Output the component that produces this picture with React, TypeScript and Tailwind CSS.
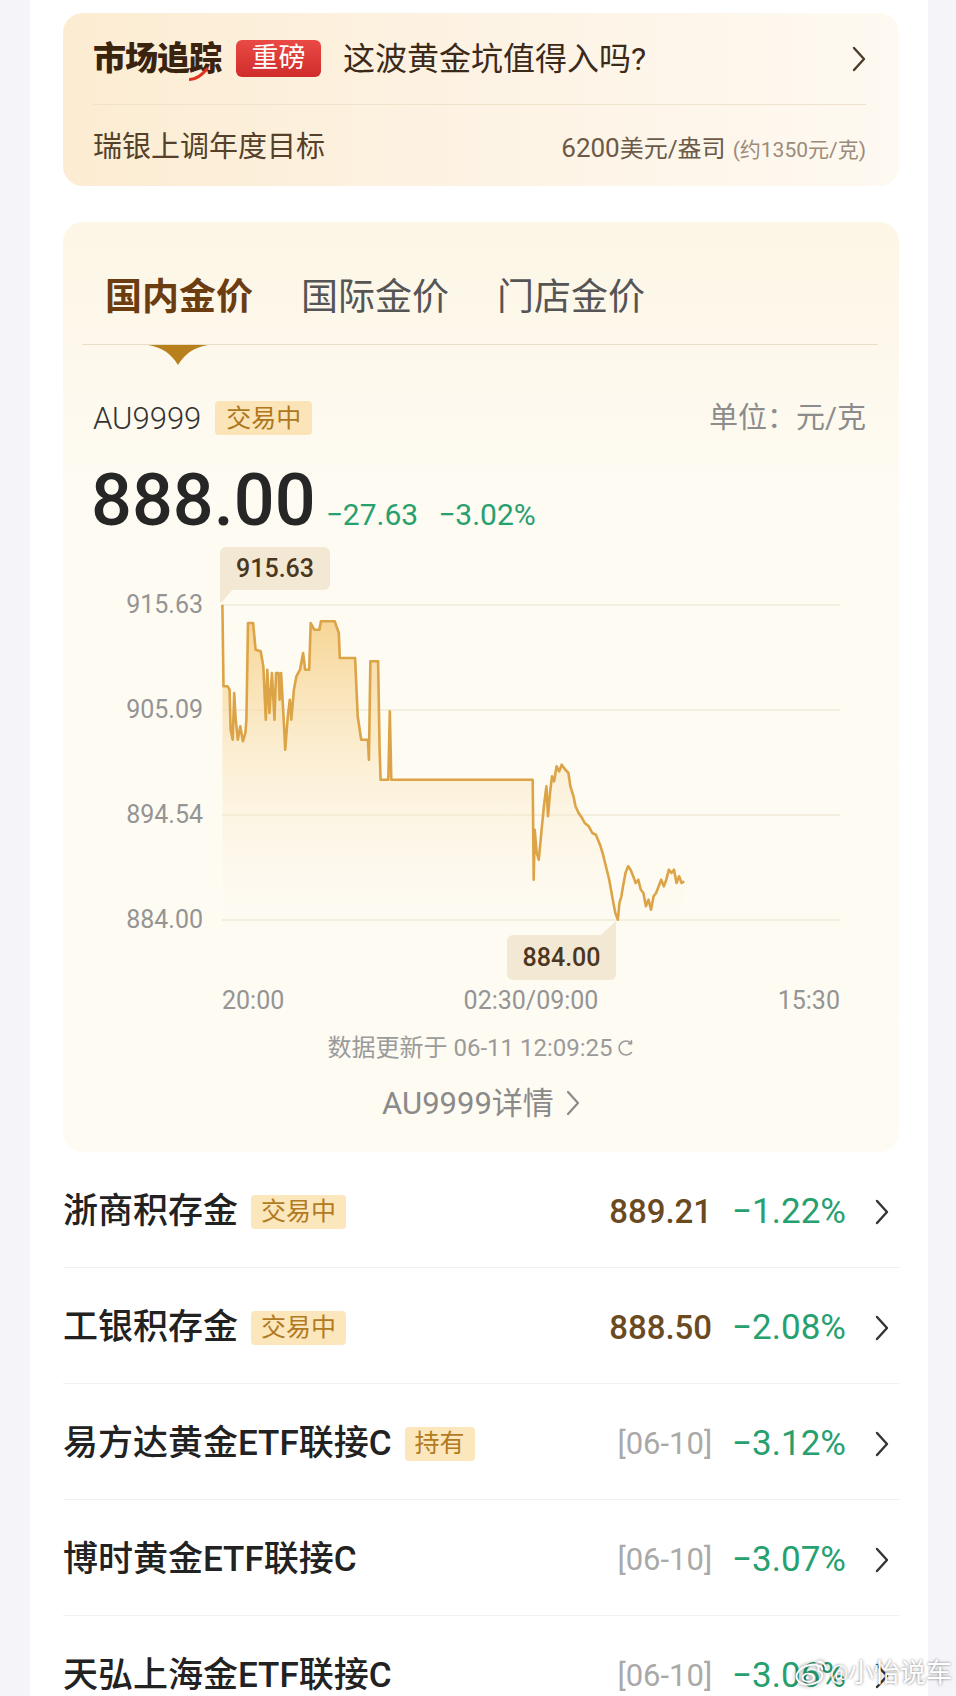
import React from "react";

const ZP: [number, number][] = [
  [240, 215], [242, 460], [250, 460], [254, 470], [256, 590], [260, 620], [263, 480], [266, 560],
  [270, 620], [275, 580], [280, 625], [285, 600], [287, 560], [290, 270], [300, 270], [305, 350],
  [315, 355], [320, 400], [325, 560], [328, 410], [332, 540], [337, 420], [342, 560], [345, 420],
  [350, 420], [352, 500], [355, 420], [360, 560], [363, 650], [368, 550], [372, 500], [375, 560],
  [380, 470], [385, 430], [392, 410], [398, 360], [402, 410], [410, 410], [413, 270], [420, 290],
  [430, 290], [433, 265], [460, 265], [468, 300], [470, 375], [500, 375], [505, 550], [512, 620],
  [525, 620], [527, 680], [530, 385], [545, 385], [548, 650], [550, 740], [565, 740], [568, 535],
  [571, 740], [848, 740], [850, 1040], [852, 890], [856, 960], [860, 980], [865, 900], [870, 820],
  [875, 760], [878, 850], [882, 780], [886, 730], [890, 745], [895, 700], [900, 715], [905, 695],
  [912, 710], [918, 720], [922, 760], [928, 790], [932, 820], [938, 840], [945, 855], [950, 870],
  [958, 880], [965, 900], [972, 905], [980, 935], [985, 960], [990, 990], [998, 1040], [1005, 1100],
  [1010, 1140], [1015, 1160], [1018, 1110], [1022, 1090], [1025, 1060], [1030, 1020], [1035, 1000],
  [1040, 1010], [1045, 1030], [1050, 1050], [1055, 1040], [1060, 1070], [1065, 1080], [1070, 1120],
  [1075, 1100], [1080, 1130], [1085, 1090], [1090, 1080], [1095, 1060], [1100, 1040], [1105, 1060],
  [1110, 1040], [1115, 1010], [1120, 1020], [1125, 1010], [1130, 1050], [1135, 1030], [1140, 1050],
  [1145, 1045],
];

const PTS = ZP.map(([x, y]) => [100 + x / 1.96, 530 + y / 3]);
const LINE = PTS.map(([x, y], i) => `${i === 0 ? "M" : "L"}${x.toFixed(1)} ${y.toFixed(1)}`).join(" ");
const LAST = PTS[PTS.length - 1];
const AREA = `${LINE} L${LAST[0].toFixed(1)} 930 L${PTS[0][0].toFixed(1)} 930 Z`;

function Chevron({ w = 14, h = 26, sw = 2.4 }: { w?: number; h?: number; sw?: number }) {
  return (
    <svg width={w} height={h} viewBox={`0 0 ${w} ${h}`} className="shrink-0">
      <polyline
        points={`2,2 ${w - 2},${h / 2} 2,${h - 2}`}
        fill="none"
        stroke="currentColor"
        strokeWidth={sw}
        strokeLinecap="round"
        strokeLinejoin="round"
      />
    </svg>
  );
}

function Badge({ children }: { children: React.ReactNode }) {
  return (
    <span className="ml-[13px] inline-flex h-[34px] items-center rounded-[4px] bg-[#fce6bb] px-[10px] text-[25px] leading-none text-[#b27a22]">
      {children}
    </span>
  );
}

type Row = {
  name: string;
  badge?: string;
  price?: string;
  date?: string;
  pct: string;
};

const ROWS: Row[] = [
  { name: "浙商积存金", badge: "交易中", price: "889.21", pct: "−1.22%" },
  { name: "工银积存金", badge: "交易中", price: "888.50", pct: "−2.08%" },
  { name: "易方达黄金ETF联接C", badge: "持有", date: "[06-10]", pct: "−3.12%" },
  { name: "博时黄金ETF联接C", date: "[06-10]", pct: "−3.07%" },
  { name: "天弘上海金ETF联接C", date: "[06-10]", pct: "−3.06%" },
];

export default function App() {
  return (
    <div className="relative h-[1696px] w-[956px] overflow-hidden bg-[#f4f4f9] font-['Roboto','Noto_Sans_CJK_SC',sans-serif]">
      <div className="ml-[30px] h-full w-[898px] bg-white pl-[33px] pr-[29px] pt-[13px]">
        {/* Top market card */}
        <div className="h-[173px] rounded-[20px] bg-gradient-to-r from-[#fcecd2] via-[#fdf3e4] to-[#fef9f1] pl-[30px] pr-[33px]">
          <div className="flex h-[91px] items-center">
            <span className="relative text-[33px] font-black leading-[40px] tracking-[-1px] text-[#3a2410]">
              市场追踪
              <svg width="20" height="14" viewBox="0 0 20 14" className="absolute left-[96px] top-[28px]">
                <path d="M1 12.5 Q 9 12.5 18 2" fill="none" stroke="#e0321e" strokeWidth="3" strokeLinecap="round" />
              </svg>
            </span>
            <span className="ml-[15px] inline-flex h-[37px] w-[85px] items-center justify-center rounded-[6px] bg-gradient-to-b from-[#ea4a44] to-[#cf2b2b] text-[27px] leading-none text-white">
              重磅
            </span>
            <span className="ml-[22px] text-[32px] leading-none text-[#3b2a19]">这波黄金坑值得入吗?</span>
            <span className="ml-auto text-[#4c3b2b]">
              <Chevron />
            </span>
          </div>
          <div className="h-px bg-[#f0e3cc]" />
          <div className="flex h-[81px] items-center pt-[4px]">
            <span className="text-[29px] leading-none text-[#55402a]">瑞银上调年度目标</span>
            <span className="ml-auto flex items-baseline leading-none text-[#6b5a48]">
              <span className="text-[26px]">6200</span>
              <span className="text-[24px]">美元/盎司</span>
              <span className="ml-[7px] text-[21px] text-[#9b8b7a]">(约1350元/克)</span>
            </span>
          </div>
        </div>

        {/* Gold price card */}
        <div className="mt-[36px] h-[930px] rounded-[20px] bg-gradient-to-b from-[#fdf6e6] to-[#fefbf3] to-30%">
          <div className="flex h-[122px] gap-[48px] pl-[42px] pt-[54px] text-[37px] leading-[44px]">
            <span className="font-bold text-[#6b3d10]">国内金价</span>
            <span className="text-[#555555]">国际金价</span>
            <span className="text-[#555555]">门店金价</span>
          </div>
          <div className="ml-[19px] mr-[21px] h-px bg-[#e9dfc6]" />
          <div className="ml-[85px] h-[20px]">
            <svg width="60" height="20" viewBox="0 0 60 20">
              <path d="M0 0 L60 0 Q 40 3 30 20 Q 20 3 0 0 Z" fill="#b7801c" />
            </svg>
          </div>

          <div className="mt-[33px] flex h-[40px] items-center pl-[30px] pr-[33px]">
            <span className="text-[31px] font-light leading-none text-[#333333]">AU9999</span>
            <span className="ml-[14px] inline-flex h-[34px] items-center rounded-[4px] bg-[#fbe4b8] px-[11px] text-[25px] leading-none text-[#ae7820]">
              交易中
            </span>
            <span className="ml-auto text-[29px] leading-none text-[#8c8c8c]">单位：元/克</span>
          </div>

          <div className="mt-[27px] flex h-[72px] items-baseline pl-[28px]">
            <span className="text-[72px] font-medium leading-none text-[#262626]">888.00</span>
            <span className="ml-[10px] text-[30px] leading-none text-[#27a06f]">−27.63</span>
            <span className="ml-[20px] text-[30px] leading-none text-[#27a06f]">−3.02%</span>
          </div>

          {/* chart */}
          <div className="relative mt-[56px]">
            <div className="flex">
              <div className="ml-[62px] flex w-[78px] flex-col gap-[81px] text-right text-[25px] leading-[24px] text-[#949494]">
                <span>915.63</span>
                <span>905.09</span>
                <span>894.54</span>
                <span>884.00</span>
              </div>
              <svg width="620" height="340" viewBox="222 590 620 340" className="ml-[19px] shrink-0 overflow-visible">
                <defs>
                  <linearGradient id="gfill" x1="0" y1="600" x2="0" y2="930" gradientUnits="userSpaceOnUse">
                    <stop offset="0" stopColor="#f6cf85" stopOpacity="0.95" />
                    <stop offset="0.45" stopColor="#f9e2b4" stopOpacity="0.55" />
                    <stop offset="1" stopColor="#fdf6e6" stopOpacity="0" />
                  </linearGradient>
                </defs>
                {[602, 707, 812, 917].map((y) => (
                  <line key={y} x1="222" x2="840" y1={y} y2={y} stroke="#f1ead8" strokeWidth="1.5" />
                ))}
                <path d={AREA} fill="url(#gfill)" />
                <path d={LINE} fill="none" stroke="#dca446" strokeWidth="2.6" strokeLinejoin="round" />
              </svg>
            </div>

            {/* top tooltip */}
            <div className="absolute left-[157px] top-[-46px] flex h-[43px] w-[110px] items-center justify-center rounded-[6px] rounded-bl-none bg-[#f3e8d3] text-[25px] font-medium leading-none text-[#4b3620]">
              915.63
              <svg width="14" height="14" viewBox="0 0 14 14" className="absolute left-0 top-[42px]">
                <path d="M0 0 L13 0 L2 13 L0 13 Z" fill="#f3e8d3" />
              </svg>
            </div>
            {/* bottom tooltip */}
            <div className="absolute left-[444px] top-[342px] flex h-[45px] w-[109px] items-center justify-center rounded-[6px] rounded-tr-none bg-[#f3e8d3] text-[25px] font-medium leading-none text-[#4b3620]">
              884.00
              <svg width="16" height="15" viewBox="0 0 16 15" className="absolute right-0 top-[-14px]">
                <path d="M0 15 L16 15 L16 0 Z" fill="#f3e8d3" />
              </svg>
            </div>

            <div className="ml-[159px] mr-[59px] mt-[52px] flex h-[30px] items-center justify-between text-[25px] leading-none text-[#949494]">
              <span>20:00</span>
              <span>02:30/09:00</span>
              <span>15:30</span>
            </div>
          </div>

          <div className="mt-[19px] flex h-[28px] items-center justify-center text-[24px] leading-none text-[#9a9a9a]">
            <span>数据更新于 06-11 12:09:25</span>
            <svg width="18" height="20" viewBox="0 0 18 20" className="ml-[4px]">
              <path d="M14.5 5.5 A7 7 0 1 0 14.5 14.5" fill="none" stroke="#9a9a9a" strokeWidth="1.6" strokeLinecap="round" />
              <path d="M14.5 2.5 L14.5 5.8 L11.5 5.8" fill="none" stroke="#9a9a9a" strokeWidth="1.4" strokeLinecap="round" />
            </svg>
          </div>

          <div className="mt-[24px] flex h-[34px] items-center justify-center text-[31px] leading-none text-[#8a8a8a]">
            <span>AU9999详情</span>
            <span className="ml-[12px]">
              <Chevron w={14} h={26} sw={2.2} />
            </span>
          </div>
        </div>

        {/* list */}
        <div>
          {ROWS.map((r, i) => (
            <div key={i} className="flex h-[116px] items-center border-b border-[#f1f1f1] pr-[10px] pt-[4px]">
              <span className="text-[35px] font-medium leading-none text-[#222222]">{r.name}</span>
              {r.badge && <Badge>{r.badge}</Badge>}
              <span className="ml-auto flex items-center leading-none">
                {r.price && <span className="text-[33px] font-medium text-[#6b4a1f]">{r.price}</span>}
                {r.date && <span className="text-[31px] text-[#a9a9a9]">{r.date}</span>}
                <span className="ml-[20px] text-[35px] text-[#27a06f]">{r.pct}</span>
                <span className="ml-[29px] text-[#333333]">
                  <Chevron w={14} h={26} sw={2.4} />
                </span>
              </span>
            </div>
          ))}
        </div>
      </div>

      {/* watermark */}
      <div className="absolute left-[794px] top-[1658px] flex items-center whitespace-nowrap text-white [text-shadow:0_0_3px_rgba(0,0,0,0.55)]">
        <svg width="36" height="30" viewBox="0 0 38 32" className="shrink-0 drop-shadow-[0_0_2px_rgba(0,0,0,0.6)]">
          <path d="M15 8 C 6 10 1 17 3 22 C 5 28 14 30 22 27 C 30 24 32 18 28 15 C 26 14 25 14 26 11 C 27 7 22 6 15 8 Z" fill="none" stroke="#ffffff" strokeWidth="2" />
          <ellipse cx="15" cy="21" rx="6" ry="4.5" fill="none" stroke="#ffffff" strokeWidth="1.8" />
          <circle cx="14" cy="21" r="1.6" fill="#ffffff" />
          <path d="M26 4 A8 8 0 0 1 34 12" fill="none" stroke="#ffffff" strokeWidth="2" strokeLinecap="round" />
          <path d="M26 8.5 A4 4 0 0 1 30 12" fill="none" stroke="#ffffff" strokeWidth="2" strokeLinecap="round" />
        </svg>
        <span className="text-[20px] leading-none">@</span>
        <span className="text-[26px] leading-none">小怡说车</span>
      </div>
    </div>
  );
}
